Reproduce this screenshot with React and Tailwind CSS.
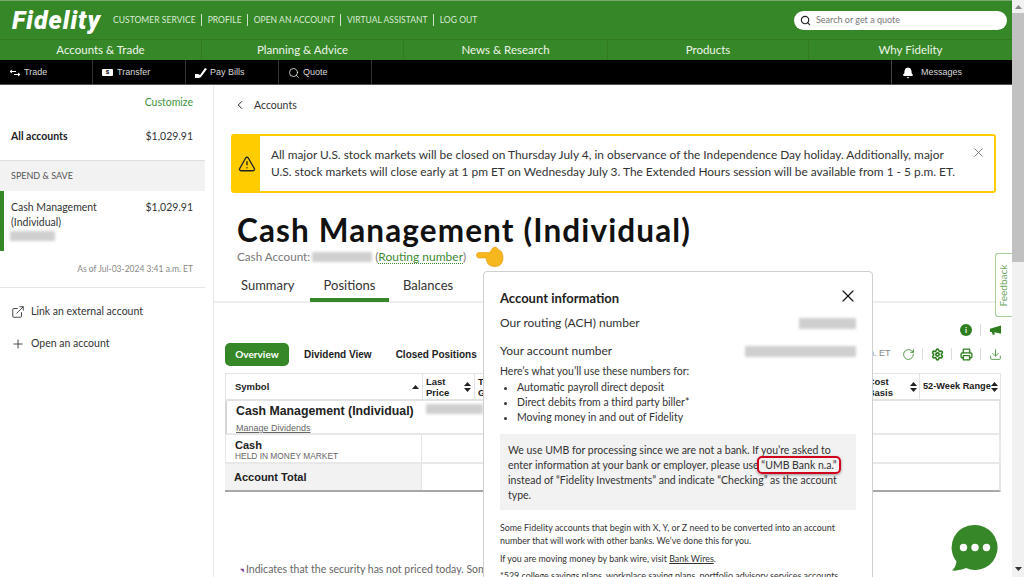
import React from "react";
import { Bell, ChevronLeft, Download, ExternalLink, Plus, Printer, RotateCw, Search, Settings, TriangleAlert, X } from "lucide-react";

const FONT = "font-['Lato','Noto_Sans',sans-serif]";
const ARIAL = "font-['Liberation_Sans',Arial,sans-serif]";

// ===== Small pieces =====
function Blurred({ className }) {
  return <div className={`bg-[#cfcfcf] blur-[1.5px] ${className}`} />;
}

function SortArrows() {
  return (
    <svg width="7" height="10" viewBox="0 0 7 10" className="shrink-0 fill-[#222]">
      <path d="M3.5 0 7 4H0zM3.5 10 0 6h7z" />
    </svg>
  );
}

function ToolLink({ icon, label, className }) {
  return (
    <div className={`flex items-center gap-[3px] border-r border-[#333] h-full pt-[1px] text-[9px] text-[#d8d8d8] ${className}`}>
      {icon}
      <span>{label}</span>
    </div>
  );
}

function HandPointer() {
  return (
    <svg width="30" height="24" viewBox="0 0 30 24">
      <path
        d="M1.500 9C1.500 7 3 6.500 5 6.500L15 6.500C16 4 18 1 20 1C22 1 22.500 3 24 4C27 5 28 8 28 12C28 17 25 20.500 20 20.500C16 20.500 13 19 12 16L11 12L4 12C2.500 12 1.500 11 1.500 9Z"
        fill="#f6b61e"
        stroke="#e09a12"
        strokeWidth=".6"
      />
    </svg>
  );
}

function Sidebar() {
  return (
    <aside className="w-[214px] shrink-0 border-r border-[#e6e6e6] text-[#333] text-[10.5px]">
      <div className="w-[205px]">
        <div className="h-[32px] pr-[12px] pt-[10px] text-right text-[10.500px] text-[#3d9440]">Customize</div>
        <div className="h-[43px] flex justify-between items-start pl-[11px] pr-[12px] pt-[12px]">
          <span className="font-bold text-[#222]">All accounts</span>
          <span>$1,029.91</span>
        </div>
        <div className="h-[31px] flex items-center pl-[11px] border-t border-[#dedede] bg-[#f2f2f2] text-[9px] text-[#555]">SPEND &amp; SAVE</div>
        <div className="h-[60px] flex justify-between border-l-[4px] border-[#368727] pl-[7px] pr-[12px] pt-[9px] leading-[15px]">
          <div>
            <div>Cash Management</div>
            <div>(Individual)</div>
            <Blurred className="w-[45px] h-[10px] -ml-[1px] mt-[1px]" />
          </div>
          <span>$1,029.91</span>
        </div>
        <div className="h-[36px] pr-[12px] pt-[12px] text-right text-[8.500px] text-[#888]">As of Jul-03-2024 3:41 a.m. ET</div>
        <div className="border-t border-[#e6e6e6] pl-[11px] pt-[16px] flex flex-col gap-[17px]">
          <div className="h-[15px] flex items-center gap-[6px]">
            <ExternalLink size={14} strokeWidth={1.5} />
            <span>Link an external account</span>
          </div>
          <div className="h-[15px] flex items-center gap-[6px]">
            <Plus size={14} strokeWidth={1.5} />
            <span>Open an account</span>
          </div>
        </div>
      </div>
    </aside>
  );
}

function PositionsTable() {
  return (
    <div className={`ml-[11px] w-[776px] text-[#222] ${ARIAL}`}>
      <div className="h-[28px] grid grid-cols-[197px_52px_1fr_80px] border border-[#e3e3e3] border-b-2 text-[9.500px] font-bold leading-[11px]">
        <div className="flex items-center justify-between pl-[9px] pr-[3px] border-r border-[#e3e3e3]">
          <span>Symbol</span>
          <svg width="7" height="4" viewBox="0 0 7 4" className="fill-[#222]"><path d="M3.500 0 7 4H0z" /></svg>
        </div>
        <div className="flex items-center justify-between pl-[3px] pr-[3px] border-r border-[#e3e3e3]">
          <span>Last<br />Price</span>
          <SortArrows />
        </div>
        <div className="flex items-center justify-between pl-[3px] pr-[2px] border-r border-[#e3e3e3]">
          <span>T<br />G</span>
          <span className="ml-auto mr-[17px]">Cost<br />Basis</span>
          <SortArrows />
        </div>
        <div className="flex items-center pl-[3px] whitespace-nowrap text-[9.200px]">
          <span>52-Week Range</span>
          <SortArrows />
        </div>
      </div>
      <div className="h-[34px] flex border-l-2 border-r-2 border-b-2 border-l-[#d5d5d5] border-r-[#e3e3e3] border-b-[#e8e8e8]">
        <div className="w-[196px] pl-[9px] pt-[2px]">
          <div className="text-[12.300px] font-bold leading-[16px]">Cash Management (Individual)</div>
          <div className="text-[9px] mt-[4px] leading-[10px] text-[#666] underline">Manage Dividends</div>
        </div>
        <div className="pl-[3px] pt-[3px]">
          <Blurred className="w-[57px] h-[10px]" />
        </div>
      </div>
      <div className="h-[29px] flex border-l border-r-2 border-b-2 border-[#e8e8e8]">
        <div className="w-[196px] pl-[9px] pt-[4px] border-r border-[#e3e3e3]">
          <div className="text-[11px] font-bold leading-[12px]">Cash</div>
          <div className="text-[8.400px] text-[#666] leading-[10px]">HELD IN MONEY MARKET</div>
        </div>
      </div>
      <div className="h-[28px] flex border-r-2 border-b-2 border-r-[#e3e3e3] border-b-[#a8a8a8]">
        <div className="w-[197px] pl-[9px] flex items-center bg-[#f2f2f2] border-r border-[#e3e3e3] text-[11px] font-bold">Account Total</div>
      </div>
    </div>
  );
}

function AccountInfoModal() {
  return (
    <div className="absolute left-[483px] top-[271px] w-[390px] h-[330px] bg-white border border-[#cfcfcf] rounded-[4px] px-[16px] pt-[18px] text-[#333] text-[10.500px]">
      <div className="flex justify-between items-start">
        <span className="text-[13px] font-bold text-[#222] leading-[17px]">Account information</span>
        <X size={20} strokeWidth={1.4} className="text-[#111] -mt-[4px] -mr-[2px]" />
      </div>
      <div className="flex justify-between items-center mt-[7px] h-[18px] text-[12px]">
        <span>Our routing (ACH) number</span>
        <Blurred className="w-[57px] h-[11px]" />
      </div>
      <div className="flex justify-between items-center mt-[10px] h-[18px] text-[12px]">
        <span>Your account number</span>
        <Blurred className="w-[111px] h-[11px]" />
      </div>
      <p className="mt-[4px] leading-[15px]">Here’s what you’ll use these numbers for:</p>
      <ul className="list-disc pl-[17px] mt-[1px] leading-[15px]">
        <li>Automatic payroll direct deposit</li>
        <li>Direct debits from a third party biller*</li>
        <li>Moving money in and out of Fidelity</li>
      </ul>
      <div className="mt-[9px] h-[76px] bg-[#f2f2f2] px-[8px] py-[9px] leading-[15px]">
        We use UMB for processing since we are not a bank. If you’re asked to enter information at your bank or employer, please use{" "}
        <span className="relative whitespace-nowrap">
          “UMB Bank n.a.”
          <span className="absolute -left-[4px] -right-[4px] -top-[3px] -bottom-[3px] border-[2.5px] border-[#d0021b] rounded-[5px] shadow-[0_1px_3px_rgba(0,0,0,0.4)]" />
        </span>{" "}
        instead of “Fidelity Investments” and indicate “Checking” as the account type.
      </div>
      <p className="mt-[11px] text-[8.900px] leading-[13px]">
        Some Fidelity accounts that begin with X, Y, or Z need to be converted into an account number that will work with other banks. We’ve done this for you.
      </p>
      <p className="mt-[5px] text-[8.900px] leading-[13px]">
        If you are moving money by bank wire, visit <span className="underline">Bank Wires</span>.
      </p>
      <p className="mt-[4px] text-[8.900px] leading-[13px]">
        *529 college savings plans, workplace saving plans, portfolio advisory services accounts
      </p>
    </div>
  );
}

export default function App() {
  const navItems = ["Accounts & Trade", "Planning & Advice", "News & Research", "Products", "Why Fidelity"];
  const topLinks = ["CUSTOMER SERVICE", "PROFILE", "OPEN AN ACCOUNT", "VIRTUAL ASSISTANT", "LOG OUT"];

  return (
    <div className={`relative w-[1024px] h-[577px] overflow-hidden bg-white flex ${FONT}`}>
      <div className="w-[1012px] shrink-0 flex flex-col">
        {/* ===== TOP BAR ===== */}
        <header className="h-[39px] shrink-0 flex items-center bg-[#368727] border-t border-[#7aa96f]">
          <span className="ml-[12px] text-[25px] leading-none font-black italic text-white font-['Roboto',sans-serif] tracking-[1px]">Fidelity</span>
          <nav className="ml-[12px] flex items-center text-[8.500px] text-[#dcebd8] tracking-[0.05px]">
            {topLinks.map((link, i) => (
              <span key={link} className={i > 0 ? "ml-[5px] pl-[6px] border-l border-[#cfe2ca]" : ""}>{link}</span>
            ))}
          </nav>
          <div className="ml-auto mr-[5px] w-[213px] h-[19px] rounded-full bg-white flex items-center pl-[6px] gap-[5px] text-[9px] text-[#777]">
            <Search size={11} strokeWidth={2.5} className="text-[#222]" />
            <span>Search or get a quote</span>
          </div>
        </header>

        {/* ===== MAIN NAV ===== */}
        <nav className="h-[21px] shrink-0 grid grid-cols-[202px_202px_204px_201px_203px] bg-[#368727] border-t border-[#317a23] text-[11.500px] text-[#eef5ec]">
          {navItems.map((item, i) => (
            <div key={item} className={`flex items-center justify-center ${i < 4 ? "border-r border-[#317a23]" : ""}`}>{item}</div>
          ))}
        </nav>

        {/* ===== BLACK TOOLBAR ===== */}
        <div className={`h-[25px] shrink-0 flex items-center bg-black border-b border-[#555] ${ARIAL}`}>
          <ToolLink
            className="w-[93px] pl-[9px]"
            label="Trade"
            icon={<svg width="12" height="8" viewBox="0 0 12 8" className="stroke-white fill-none"><path d="M3 1 1 2.500 3 4M1 2.500h6M9 4l2 1.500L9 7M11 5.500H5" /></svg>}
          />
          <ToolLink
            className="w-[93px] pl-[9px]"
            label="Transfer"
            icon={<span className="w-[11px] h-[7px] mr-[1px] bg-white rounded-[1px] text-[6px] leading-[7px] text-center text-black font-bold">$</span>}
          />
          <ToolLink
            className="w-[93px] pl-[9px]"
            label="Pay Bills"
            icon={<svg width="12" height="12" viewBox="0 0 12 12" className="fill-white"><path d="M0 11V7h3l2 1 5-7 2 1-6 8-2 1H0z" /></svg>}
          />
          <ToolLink
            className="w-[93px] pl-[9px]"
            label="Quote"
            icon={<Search size={12} strokeWidth={1.5} className="text-white" />}
          />
          <div className="ml-auto w-[121px] h-full flex items-center gap-[7px] pl-[10px] pt-[1px] border-l border-[#444] text-[9px] text-[#d8d8d8]">
            <Bell size={12} fill="white" className="text-white" />
            <span>Messages</span>
          </div>
        </div>

        {/* ===== BODY ===== */}
        <div className="flex-1 min-h-0 flex">
          <Sidebar />

          <main className="flex-1 min-w-0">
            <div className="h-[49px] flex items-start pl-[19px] pt-[12px] gap-[7px] text-[10.500px] text-[#333]">
              <ChevronLeft size={14} strokeWidth={1.7} className="mt-[1px] text-[#222]" />
              <span className="leading-[16px]">Accounts</span>
            </div>

            {/* Alert */}
            <div className="ml-[17px] w-[765px] h-[59px] flex border-2 border-[#ffcc00] rounded-[3px]">
              <div className="w-[27px] shrink-0 bg-[#ffcc00] flex items-center justify-center">
                <TriangleAlert size={18} strokeWidth={1.8} className="text-[#222]" />
              </div>
              <p className="pl-[11px] pt-[10px] text-[11.900px] leading-[17px] text-[#333] whitespace-pre-line">
                {"All major U.S. stock markets will be closed on Thursday July 4, in observance of the Independence Day holiday. Additionally, major\nU.S. stock markets will close early at 1 pm ET on Wednesday July 3. The Extended Hours session will be available from 1 - 5 p.m. ET."}
              </p>
              <X size={15} strokeWidth={1.3} className="ml-auto mt-[9px] mr-[8px] shrink-0 text-[#666]" />
            </div>

            {/* Title */}
            <h1 className="ml-[23px] mt-[19px] h-[38px] text-[31.500px] leading-[37px] font-bold text-[#111] tracking-[1.12px] whitespace-nowrap">Cash Management (Individual)</h1>
            <div className="ml-[23px] flex items-center h-[14px] text-[11.700px] text-[#777]">
              <span>Cash Account:</span>
              <Blurred className="w-[60px] h-[10px] ml-[2px] mr-[3px]" />
              <span>(</span>
              <span className="text-[#3d8a33] border-b border-dotted border-[#3d8a33] leading-[12px] text-[12px]">Routing number</span>
              <span>)</span>
            </div>

            {/* Tabs */}
            <div className="mt-[11px] h-[28px] flex items-start border-b-2 border-[#eeeeee] text-[13px] text-[#333]">
              <div className="ml-[27px] w-[69px] leading-[17px] mt-[2px]">Summary</div>
              <div className="w-[79px] h-[27px] pt-[2px] text-center border-b-[4px] border-[#368727] leading-[17px]">Positions</div>
              <div className="ml-[14px] leading-[17px] mt-[2px]">Balances</div>
            </div>

            {/* Toolbar row */}
            <div className="h-[37px] mt-[1px] flex justify-end items-center pr-[11px] pt-[15px]">
              <span className="w-[12px] h-[12px] rounded-full bg-[#2e7d1f] text-white text-[8px] font-bold leading-[12px] text-center">i</span>
              <span className="w-px h-[12px] bg-[#ddd] ml-[8px] mr-[8px]" />
              <svg width="12" height="11" viewBox="0 0 13 11" className="fill-[#2e7d1f]"><path d="M13 0v9L5 7H1V3.500z" /><path d="M3 7h3v3H4z" /></svg>
            </div>
            <div className="h-[24px] mt-[1px] flex items-center">
              <div className="ml-[11px] w-[64px] h-[23px] rounded-[5px] bg-[#368727] flex items-center justify-center text-[10px] font-bold text-white">Overview</div>
              <span className={`ml-[15px] text-[10px] font-bold text-[#222] ${ARIAL}`}>Dividend View</span>
              <span className={`ml-[24px] text-[10px] font-bold text-[#222] ${ARIAL}`}>Closed Positions</span>
              <div className="ml-auto flex items-center mr-[10.500px] text-[#3c8a30]">
                <span className={`mr-[11px] text-[9px] text-[#888] ${ARIAL}`}>n. ET</span>
                <RotateCw size={13} strokeWidth={1.6} />
                <span className="w-px h-[12px] bg-[#ddd] mx-[7.500px]" />
                <Settings size={13} strokeWidth={3} className="text-[#2e7d1f]" />
                <span className="w-px h-[12px] bg-[#ddd] mx-[7.500px]" />
                <Printer size={13} strokeWidth={2.4} className="text-[#2e7d1f]" />
                <span className="w-px h-[12px] bg-[#ddd] mx-[7.500px]" />
                <Download size={13} strokeWidth={1.5} />
              </div>
            </div>
            <div className="h-[7px]" />
            <PositionsTable />
            <p className="ml-[26px] mt-[70px] whitespace-nowrap text-[10.500px] text-[#666]">
              <span className="text-[5px] align-middle text-[#7b3f98] mr-[2px]">◥</span>Indicates that the security has not priced today. Some
            </p>
          </main>
        </div>
      </div>

      {/* Page scrollbar */}
      <div className="w-[12px] shrink-0 bg-[#f1f1f1] flex flex-col items-center">
        <svg width="7" height="4" viewBox="0 0 7 4" className="mt-[5px] fill-[#888]"><path d="M3.500 0 7 4H0z" /></svg>
        <div className="w-full h-[249px] mt-[4px] bg-[#c1c1c1]" />
        <svg width="7" height="4" viewBox="0 0 7 4" className="mt-auto mb-[6px] fill-[#333]"><path d="M0 0h7L3.500 4z" /></svg>
      </div>

      {/* ===== OVERLAYS ===== */}
      <div className="absolute left-[995px] top-[253px] w-[17px] h-[64px] bg-white border border-r-0 border-[#a9cf9b] rounded-l-[3px] flex items-center justify-center">
        <span className="-rotate-90 text-[10px] text-[#6ea85f]">Feedback</span>
      </div>
      <div className="absolute left-[475px] top-[246px]"><HandPointer /></div>
      <AccountInfoModal />
      <svg width="48" height="48" viewBox="0 0 48 48" className="absolute left-[951px] top-[524px]">
        <path d="M24 1a22.500 22.500 0 1 1-9 43.100C11 46 6 47 1 46.500c2.500-2 4-5 4.500-9A22.500 22.500 0 0 1 24 1z" fill="#368727" />
        <circle cx="12.500" cy="23.500" r="3.700" fill="#fff" />
        <circle cx="24" cy="23.500" r="3.700" fill="#fff" />
        <circle cx="35.500" cy="23.500" r="3.700" fill="#fff" />
      </svg>
    </div>
  );
}
